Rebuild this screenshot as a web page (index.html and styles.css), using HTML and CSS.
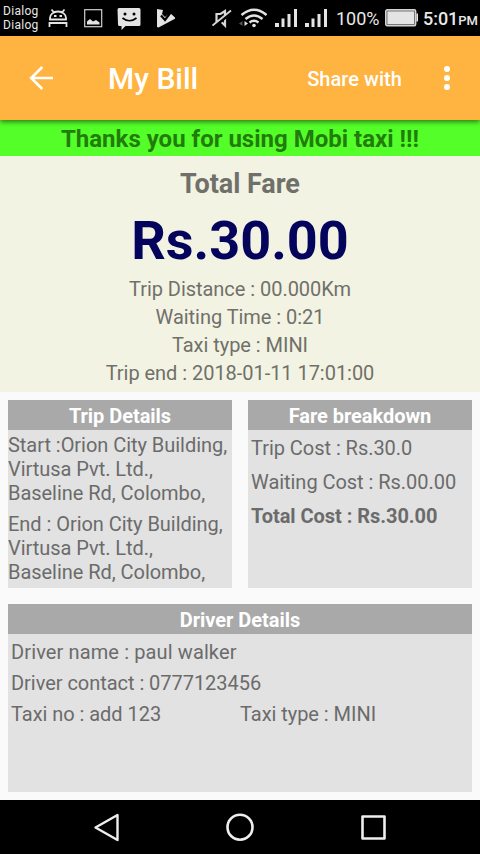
FILE: index.html
```html
<!DOCTYPE html>
<html lang="en">

<head>
  <meta charset="utf-8">
  <title>My Bill</title>
  <link rel="stylesheet" href="styles.css">
</head>

<body>
  <div class="status-bar">
    <div class="notifications">
      <div class="carrier">Dialog<br>Dialog</div>
      <!-- android -->
      <svg width="20" height="20" viewBox="0 0 20 20" fill="none" stroke="#e4e4e4" stroke-width="1.800">
        <path d="M2 11.500V10a8 6.500 0 0 1 16 0v1.500zM6 4.500 3.500 1.500M14 4.500 16.500 1.500M1.500 19v-4h17v4" />
        <path d="M6 8h2.500M11.500 8H14" />
      </svg>
      <!-- picture -->
      <svg width="20" height="20" viewBox="0 0 20 20">
        <rect x="1.700" y="1.700" width="17" height="17" fill="none" stroke="#d0d0d0" stroke-width="1.200" />
        <path d="M4 16.500v-3l3-2.500 3 2.500 3-1.500 3.500 2.500v2z" fill="#e4e4e4" />
      </svg>
      <!-- message -->
      <svg class="message" width="24" height="24" viewBox="0 0 24 24">
        <path d="M2 1h20q1.500 0 1.500 1.500v15q0 1.500-1.500 1.500H8.500L4.500 23v-4H2.500Q1 19 1 17.500L.500 2.500Q.500 1 2 1z" fill="#e4e4e4" />
        <circle cx="8" cy="7" r="1.500" />
        <circle cx="17" cy="7" r="1.500" />
        <path d="M5.500 11q7 5.500 14 0" fill="none" stroke="#000" stroke-width="1.700" />
      </svg>
      <!-- play store -->
      <svg class="play" width="20" height="20" viewBox="0 0 20 20">
        <path d="M1 1l6 1-1 4 3 3 5-4 5 4.500q.500 1-.500 1.500L2.500 19.500 1 19z" fill="#e4e4e4" />
        <path d="M5 7.500 9 12l6-8" fill="none" stroke="#000" stroke-width="2.200" />
      </svg>
    </div>
    <div class="signals">
      <!-- muted -->
      <svg class="muted" width="20" height="20" viewBox="0 0 20 20" fill="none" stroke="#d8d8d8">
        <path d="M4.500 6h4L13 3v14.500L8.500 13h-4z" stroke-width="2.200" />
        <path d="M1 19.500 19.500 4.500" stroke="#000" stroke-width="3" />
        <path d="M.500 17.500 19 2.500" stroke-width="1.800" />
      </svg>
      <!-- wifi -->
      <svg class="wifi" width="28" height="20" viewBox="0 0 28 20" fill="none" stroke="#e4e4e4" stroke-width="2.400">
        <path d="M2.500 7q12.500-10.500 25 0M6.500 11q8.500-7 17 0M10.500 14.500q4.500-3.500 9 0" />
        <circle cx="15" cy="17.500" r="1.800" fill="#e4e4e4" stroke="none" />
        <path d="M3.500 13v5L0 15.500z" fill="#555" stroke="none" />
        <path d="M5.500 13v5L9 15.500z" fill="#e4e4e4" stroke="none" />
      </svg>
      <svg class="bars" width="22" height="18" viewBox="0 0 22 18" fill="#e4e4e4">
        <path d="M0 14h4v4H0zM6.500 9.500h3V18h-3zM12.500 5h3v13h-3zM19 0h3v18h-3z" />
      </svg>
      <svg class="bars" width="22" height="18" viewBox="0 0 22 18" fill="#e4e4e4">
        <path d="M0 14h4v4H0zM6.500 9.500h3V18h-3zM12.500 5h3v13h-3zM19 0h3v18h-3z" />
      </svg>
      <span class="percent">100%</span>
      <svg class="battery" width="34" height="18" viewBox="0 0 34 18">
        <rect x=".700" y=".700" width="30" height="16" rx="1.500" fill="#777" stroke="#d4d4d4" stroke-width="1.400" />
        <rect x="2.500" y="2.500" width="26.500" height="12.500" fill="#e4e4e4" />
        <path d="M31.400 4.500h1.600v8h-1.600z" fill="#e4e4e4" />
      </svg>
      <span class="clock">5:01<small>PM</small></span>
    </div>
  </div>

  <div class="toolbar">
    <svg class="back" width="24" height="24" viewBox="0 0 24 24" fill="none" stroke="#fff" stroke-width="2.600">
      <path d="M24 12H2M13.300 1 2.200 12l11.100 11" />
    </svg>
    <h1 class="title">My Bill</h1>
    <span class="share">Share with</span>
    <svg class="more" width="6" height="24" viewBox="0 0 6 24" fill="#fff">
      <circle cx="3" cy="3" r="3" />
      <circle cx="3" cy="12" r="3" />
      <circle cx="3" cy="21" r="3" />
    </svg>
  </div>

  <div class="thanks">Thanks you for using Mobi taxi !!!</div>

  <div class="summary">
    <h2>Total Fare</h2>
    <div class="fare">Rs.30.00</div>
    <p>Trip Distance : 00.000Km</p>
    <p>Waiting Time : 0:21</p>
    <p>Taxi type : MINI</p>
    <p>Trip end : 2018-01-11 17:01:00</p>
  </div>

  <div class="details">
    <div class="card trip">
      <h3>Trip Details</h3>
      <p>Start :Orion City Building,<br>Virtusa Pvt. Ltd.,<br>Baseline Rd, Colombo,</p>
      <p>End : Orion City Building,<br>Virtusa Pvt. Ltd.,<br>Baseline Rd, Colombo,</p>
    </div>
    <div class="card breakdown">
      <h3>Fare breakdown</h3>
      <p>Trip Cost : Rs.30.0</p>
      <p>Waiting Cost : Rs.00.00</p>
      <p class="total">Total Cost : Rs.30.00</p>
    </div>
    <div class="card driver">
      <h3>Driver Details</h3>
      <p class="name">Driver name : paul walker</p>
      <p>Driver contact : 0777123456</p>
      <div class="taxi">
        <p>Taxi no : add 123</p>
        <p>Taxi type : MINI</p>
      </div>
    </div>
  </div>

  <div class="nav-bar">
    <svg width="28" height="30" viewBox="0 0 28 30" fill="none" stroke="#eee" stroke-width="2.400" stroke-linejoin="round">
      <path d="M24.500 3v25L2.500 15.500z" />
    </svg>
    <svg class="home" width="28" height="28" viewBox="0 0 28 28" fill="none" stroke="#eee" stroke-width="2.600">
      <circle cx="14" cy="14.200" r="12.500" />
    </svg>
    <svg width="26" height="26" viewBox="0 0 26 26" fill="none" stroke="#eee" stroke-width="2.600" stroke-linejoin="round">
      <rect x="1.500" y="2.500" width="22" height="22" />
    </svg>
  </div>
</body>

</html>
```
FILE: styles.css
```css
body {
  margin: 0;
  width: 480px;
  height: 854px;
  display: flex;
  flex-direction: column;
  overflow: hidden;
  background-color: #fafafa;
  color: #6b6b6b;
  font-family: Roboto, sans-serif;
  font-size: 20px;
  letter-spacing: -0.04px;
}

h1, h2, h3, p {
  margin: 0;
}

svg {
  display: block;
  flex: none;
}

.status-bar {
  height: 36px;
  display: flex;
  justify-content: space-between;
  align-items: center;
  background-color: #000;
  color: #e8e8e8;
}

.notifications,
.signals {
  display: flex;
  align-items: center;
}

.notifications {
  gap: 15px;
  padding-left: 3px;
}

.carrier {
  width: 30px;
  font-size: 12px;
  line-height: 14px;
  letter-spacing: 0.3px;
}

.message {
  margin: 2px 0 0 -1px;
}

.play {
  margin-top: -1px;
}

.signals {
  padding-right: 3px;
}

.wifi {
  margin-left: 7px;
}

.bars {
  margin-left: 8px;
}

.percent {
  width: 43px;
  margin-left: 9px;
  font-size: 18px;
}

.battery {
  margin-left: 6px;
}

.clock {
  width: 54px;
  margin-left: 4px;
  font-size: 18px;
  font-weight: 500;
  white-space: nowrap;
}

.clock small {
  font-size: 13px;
}

.toolbar {
  position: relative;
  height: 84px;
  display: flex;
  align-items: center;
  padding: 0 30px 0 29px;
  background-color: #ffb340;
  box-shadow: 0 2px 5px rgba(0, 0, 0, 0.5);
  color: #fff;
}

.title {
  flex: 1;
  margin-left: 55px;
  font-size: 30px;
  font-weight: 500;
  letter-spacing: 0;
}

.share {
  margin-right: 42px;
  padding-top: 2px;
  font-size: 20px;
  font-weight: 500;
  letter-spacing: 0.05px;
}

.thanks {
  height: 36px;
  line-height: 39px;
  background-color: #54ff29;
  color: #227c0c;
  font-size: 24px;
  font-weight: 700;
  letter-spacing: 0;
  text-align: center;
}

.summary {
  height: 236px;
  background-color: #f3f3e3;
  color: #70706a;
  text-align: center;
}

.summary h2 {
  padding-top: 12px;
  font-size: 27px;
  line-height: 32px;
}

.fare {
  height: 75px;
  line-height: 82px;
  color: #04045c;
  font-size: 54px;
  font-weight: 700;
  letter-spacing: 0;
}

.summary p {
  line-height: 28px;
}

.details {
  flex: 1;
  display: grid;
  grid-template-columns: 1fr 1fr;
  grid-template-rows: 188px 188px;
  gap: 16px;
  padding: 8px;
}

.card {
  background-color: #e2e2e2;
  white-space: nowrap;
}

.card h3 {
  height: 30px;
  line-height: 32px;
  background-color: #a9a9a9;
  color: #fff;
  font-size: 20px;
  text-align: center;
}

.trip p {
  margin-top: 3px;
  margin-bottom: 7px;
  line-height: 24px;
}

.breakdown p {
  padding: 2px 0 0 3px;
  line-height: 32px;
}

.total {
  font-weight: 700;
}

.driver {
  grid-column: span 2;
}

.driver p {
  padding-left: 3px;
  line-height: 31px;
}

.driver .name {
  letter-spacing: 0.12px;
}

.driver h3 {
  margin-bottom: 3px;
}

.taxi {
  display: grid;
  grid-template-columns: 229px 1fr;
}

.nav-bar {
  height: 54px;
  display: flex;
  align-items: center;
  justify-content: space-between;
  padding: 0 93px;
  background-color: #000;
}

.home {
  margin-right: 3px;
}
```
